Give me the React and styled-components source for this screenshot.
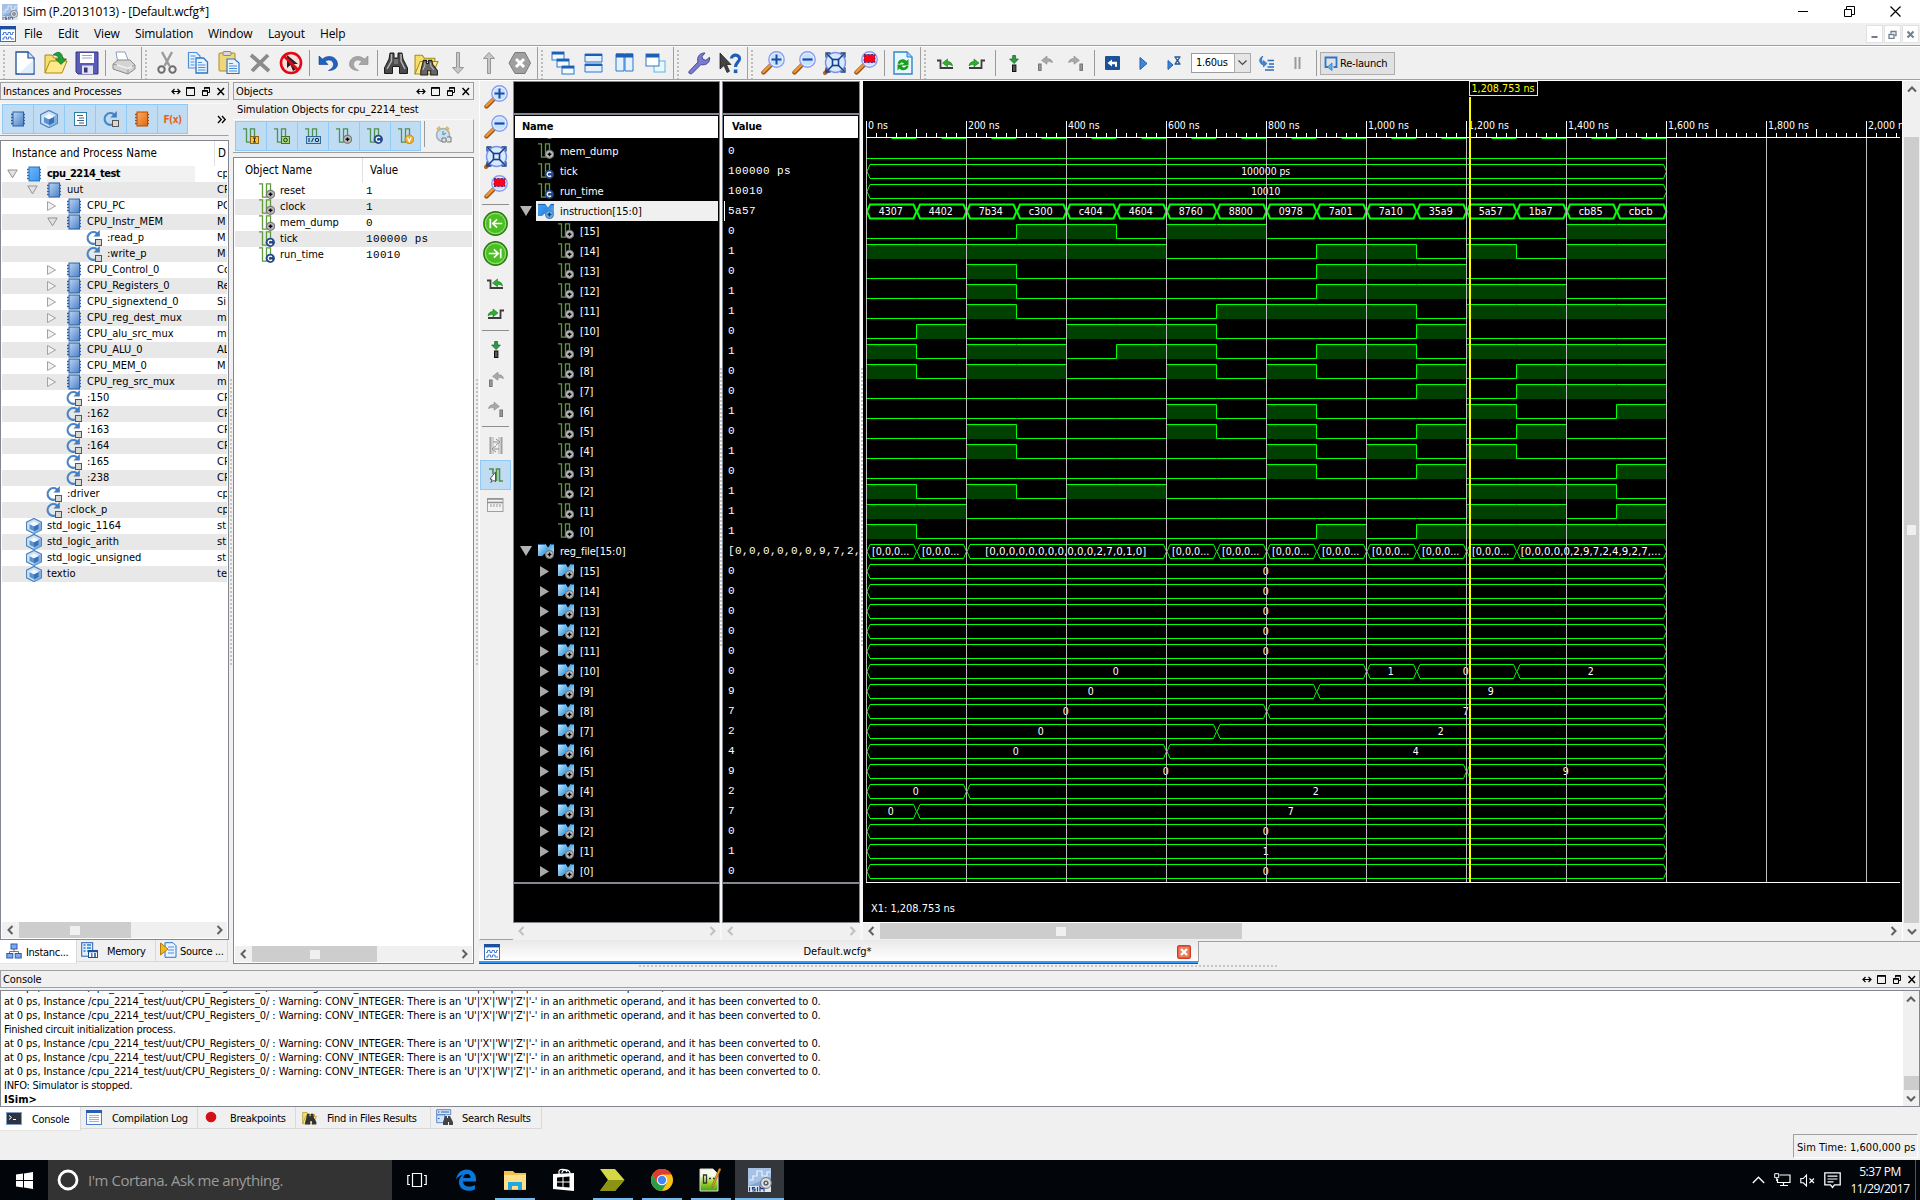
import React from "react";
import styled, { createGlobalStyle, css } from "styled-components";

const TAHOMA = `"DejaVu Sans Condensed", "DejaVu Sans", "Noto Sans", sans-serif`;
const SEGOE = `"Open Sans", "Noto Sans", sans-serif`;
const MONO = `"Liberation Mono", "DejaVu Sans Mono", monospace`;

const Global = createGlobalStyle`
  html, body { margin: 0; padding: 0; background: #f0f0f0; overflow: hidden; }
  * { box-sizing: border-box; }
  svg { display: block; flex: none; }
`;

const Screen = styled.div`
  width: 1920px;
  height: 1200px;
  display: flex;
  flex-direction: column;
  overflow: hidden;
  background: #f0f0f0;
  color: #000;
  font-family: ${TAHOMA};
  font-size: 11px;
  white-space: nowrap;
`;

/* ---------- small icons ---------- */

const Glyph = ({ w = 16, h = w, vw = w, vh = vw === w ? h : vw, children }) => (
  <svg width={w} height={h} viewBox={`0 0 ${vw} ${vh}`} fill="none">{children}</svg>
);

const Chip = ({ tone = "blue", s = 16 }) => {
  const [edge, a, b] = {
    blue: ["#2b5fa8", "#bcd5f2", "#4a80c6"],
    bright: ["#2472c4", "#6db8fa", "#3b93e6"],
    orange: ["#b44a00", "#ffa860", "#e06a10"],
  }[tone];
  return (
    <Glyph w={s} vw={16}>
      <defs>
        <linearGradient id={`chip-${tone}`} x1="0" y1="0" x2="1" y2="1">
          <stop offset="0" stopColor={a} />
          <stop offset="1" stopColor={b} />
        </linearGradient>
      </defs>
      <path d="M1 3.500h14M1 6.500h14M1 9.500h14M1 12.500h14" stroke={edge} strokeWidth="1.500" />
      <rect x="3" y="1" width="10.500" height="14" fill={`url(#chip-${tone})`} stroke={edge} strokeWidth="1" />
    </Glyph>
  );
};

const Process = ({ s = 16 }) => (
  <Glyph w={s} vw={16}>
    <path d="M10 13.200A5.800 5.800 0 1 1 11 3.400" stroke="#4a86c5" strokeWidth="2.200" />
    <path d="M13.800 0v6.400H7.400Z" fill="#3f7cc0" />
    <rect x="9.500" y="9.500" width="6" height="6" fill="#d8d8d8" stroke="#555" />
  </Glyph>
);

const Cube = ({ s = 16 }) => (
  <Glyph w={s} vw={16}>
    <path d="M8 .4 15.500 4.200v7.600L8 15.600.5 11.800V4.200Z" fill="#cfe2f6" stroke="#4f85bd" strokeWidth="1.200" />
    <path d="M8 7.800 15 4.200v7.600L8 15.400Z" fill="#7fb0e2" />
    <path d="M3.500 6 8 8.300v5L3.500 11Z" fill="#5c93cf" />
    <path d="M8 8.300 12.500 6v5L8 13.300Z" fill="#3a70b4" />
    <path d="M3.500 6 8 3.600l4.500 2.400L8 8.300Z" fill="#f3f9ff" />
  </Glyph>
);

const Signal = ({ badge = "plus", s = 16, stroke = "#5f9a3c" }) => (
  <Glyph w={s} vw={16}>
    <path d="M0 .8H3.500V14.200H7.500V.8H11.500V9" stroke={stroke} strokeWidth="1.300" />
    {badge === "plus" && (
      <>
        <circle cx="11.500" cy="11.300" r="4.600" fill="#777" />
        <circle cx="11.500" cy="11.300" r="3.400" fill="#c0c0c0" />
        <path d="M11.500 9.400v3.800M9.600 11.300h3.800" stroke="#000" strokeWidth="1.500" />
      </>
    )}
    {badge === "c" && (
      <>
        <circle cx="11.300" cy="11.300" r="4.600" fill="#24498e" />
        <path d="M13 9.800a2.200 2.200 0 1 0 0 3" stroke="#fff" strokeWidth="1.300" />
      </>
    )}
    {badge === "i" && (
      <>
        <rect x="7.500" y="8.500" width="8" height="7" fill="#f6c545" stroke="#8a6a10" />
        <path d="M10 10h3M11.500 10v4M10 14h3" stroke="#222" />
      </>
    )}
    {badge === "o" && (
      <>
        <rect x="7.500" y="8.500" width="8" height="7" fill="#a8d880" stroke="#3b7a1b" />
        <circle cx="11.500" cy="12" r="1.800" stroke="#1b3a0a" />
      </>
    )}
    {badge === "io" && (
      <>
        <rect x="1.500" y="8.500" width="14" height="7" fill="#a9d5f5" stroke="#2b6ba0" />
        <path d="M4 10v4M6.500 14l2-4" stroke="#123" />
        <circle cx="12" cy="12" r="1.700" stroke="#123" />
      </>
    )}
    {badge === "v" && (
      <>
        <circle cx="11.300" cy="11.300" r="4.400" fill="#f0b030" stroke="#a07010" strokeWidth=".6" />
        <path d="M9.500 9.500 11.300 13.500 13 9.500" stroke="#fff" strokeWidth="1.200" />
      </>
    )}
  </Glyph>
);

const Bus = ({ hot }) => (
  <Glyph w={16}>
    <defs>
      <linearGradient id={hot ? "bus-hot" : "bus"} x1="0" y1="0" x2="1" y2=".6">
        <stop offset="0" stopColor={hot ? "#4aa4f0" : "#d6ecfb"} />
        <stop offset=".6" stopColor={hot ? "#2f8ae4" : "#4aa6e4"} />
        <stop offset="1" stopColor={hot ? "#5aaef4" : "#a8d8f8"} />
      </linearGradient>
    </defs>
    <path d="M0 1h7.500L10 4.500 12.500 1H16v11H9.500L7 10.500 4 13H0Z" fill={`url(#${hot ? "bus-hot" : "bus"})`} />
    <path d="M0 1.400h7.200M13 1.400h3" stroke="#1c5f9c" />
    <circle cx="11.500" cy="11.500" r="4.500" fill={hot ? "#3f86c8" : "#777"} />
    <circle cx="11.500" cy="11.500" r="3.200" fill={hot ? "#6fb0e6" : "#c0c0c0"} />
    <path d="M11.500 9.600v3.800M9.600 11.500h3.800" stroke={hot ? "#143c6c" : "#000"} strokeWidth="1.400" />
  </Glyph>
);

const WaveDoc = ({ s = 16 }) => (
  <Glyph w={s} vw={16}>
    <rect x=".5" y=".5" width="15" height="15" fill="#fff" stroke="#3f6fb5" />
    <rect width="16" height="3.400" fill="#1d4fa0" />
    <path d="M2 8.500h1.500v-2H6v2h2v-2h2.500v2h2v-2H14M2 13h2v-2h2.500v2h2v-2H11v2h3" stroke="#3a6fd0" strokeWidth=".9" />
  </Glyph>
);

const ISimLogo = ({ s = 16 }) => (
  <Glyph w={s} vw={24}>
    <rect width="23" height="24" fill="#7fa6d8" />
    <path d="M0 0h23v9L0 18Z" fill="#b5cdec" opacity=".7" />
    <path d="M1 12h4V8h4V3h5v5h5V4h4" stroke="#fff" strokeWidth="1.200" opacity=".8" />
    <rect y="18" width="23" height="6" fill="#dfe7f3" />
    <path d="M1.500 19v4.500M7 19.500H4.500v1.700H7V23H4.200M9.500 19v4.500M12 23.500V19l2 2 2-2v4.500" stroke="#1c3b7a" strokeWidth="1.200" />
    <circle cx="18" cy="15" r="5.400" fill="#d9dde2" stroke="#6a717b" strokeWidth="1" />
    <circle cx="18" cy="15" r="2.600" fill="#59606a" />
    <circle cx="18" cy="15" r="1" fill="#fff" />
  </Glyph>
);

const Lens = ({ kind }) => (
  <Glyph w={24}>
    <path d="M2.500 21.500 9.500 14.500" stroke="#9a5416" strokeWidth="4.400" strokeLinecap="round" />
    <path d="M2.400 21 9.200 14.200" stroke="#f0983c" strokeWidth="2.400" strokeLinecap="round" />
    <circle cx="15.500" cy="8.500" r="7.700" fill="#eaf4ff" stroke="#8c9cf0" strokeWidth="1.400" />
    <circle cx="15.500" cy="8.500" r="6" fill="#c3e2ff" />
    {kind === "in" && <path d="M15.500 3.500v10M10.500 8.500h10" stroke="#1c4aa0" strokeWidth="2" />}
    {kind === "out" && <path d="M10.500 8.500h10" stroke="#1c4aa0" strokeWidth="2.200" />}
    {kind === "box" && (
      <>
        <rect x="10" y="3.500" width="11" height="8" fill="#ff0018" />
        <path d="M10 3.500h11v8H10Z" stroke="#1a2a80" strokeDasharray="2 1.500" strokeWidth=".8" />
      </>
    )}
  </Glyph>
);

const LensFit = () => (
  <Glyph w={24}>
    <path d="M2 22 5 19" stroke="#b5621a" strokeWidth="4" strokeLinecap="round" />
    <circle cx="12.500" cy="11.500" r="10" fill="#d6e9ff" stroke="#7d92ea" strokeWidth="1.400" />
    <rect x="9.500" y="8.500" width="6" height="6" stroke="#143f86" strokeWidth="1.600" />
    <path d="M9.500 8.500 4 3M15.500 8.500 21 3M9.500 14.500 4 20M15.500 14.500 21 20" stroke="#143f86" strokeWidth="1.500" />
    <path d="M3 6.500V2h4.500M17.500 2H22v4.500M3 16.500V21h4.500M17.500 21H22v-4.500" stroke="#143f86" strokeWidth="1.300" />
  </Glyph>
);

const Binoculars = ({ s = 24 }) => (
  <Glyph w={s} vw={24}>
    <path d="M6 2h4v5h4V2h4l1 6 4.500 9v5.500H15.500v-7h-7v7H.5V17L5 8Z" fill="#4a4a4a" stroke="#1b1b1b" />
    <path d="M7.500 3v7l-4.500 8M17 3v7l4 8" stroke="#b4b4b4" strokeWidth="1.500" />
    <path d="M11 8v5M13 8v5" stroke="#999" />
  </Glyph>
);

const FolderShape = () => (
  <>
    <path d="M1 22V4h7l2 3h10v4" fill="#f5df6c" stroke="#a88a14" />
    <path d="M1 22 6 10h17l-5 12Z" fill="#ffe98a" stroke="#a88a14" />
  </>
);

const Edge = ({ dir, w = 17 }) => (
  <Glyph w={w} h={11}>
    {dir === "prev" ? (
      <>
        <path d="M0 2.500H3.500V10H16" stroke="#3c3c3c" strokeWidth="1.800" />
        <path d="M15.500 8C15 4.600 13 3.600 10.500 3.600V1L5.500 5l5 3.800V6.500c2 0 3.600 0 5 1.500Z" fill="#2fae2f" stroke="#0f7a16" strokeWidth=".6" />
      </>
    ) : (
      <>
        <path d="M17 2.500H13.500V10H1" stroke="#3c3c3c" strokeWidth="1.800" />
        <path d="M1 8C1.500 4.600 3.500 3.600 6 3.600V1L11 5 6 8.800V6.500C4 6.500 2.400 6.500 1 8Z" fill="#2fae2f" stroke="#0f7a16" strokeWidth=".6" />
      </>
    )}
  </Glyph>
);

const MarkerAdd = () => (
  <Glyph w={10} h={17}>
    <path d="M3.600.5h3v3.500h2.800L5.100 8.600.6 4h3Z" fill="#2f9a45" stroke="#146326" strokeWidth=".7" />
    <rect x="3.500" y="10" width="3.400" height="6.500" fill="#555" stroke="#111" />
  </Glyph>
);

const MarkerGo = ({ dir }) => (
  <Glyph w={16} h={15}>
    <g transform={dir === "next" ? "matrix(-1 0 0 1 16 0)" : undefined}>
      <path d="M15.500 6.500C15 3.600 12.500 2.600 10 2.600V0L4.600 4.400 10 8.200V5.600c2 0 3.600 0 5.500.9Z" fill="#a8a8a8" stroke="#8a8a8a" strokeWidth=".6" />
      <rect x="1.500" y="8" width="2.600" height="6.600" fill="#999" stroke="#777" />
    </g>
  </Glyph>
);

const GreenJump = ({ dir }) => (
  <Glyph w={25} vw={24}>
    <circle cx="12" cy="12" r="11.200" fill="#4bbf22" stroke="#2b7d10" strokeWidth="1.400" />
    <circle cx="12" cy="12" r="9.700" stroke="#a6e88c" strokeWidth=".9" />
    <g transform={dir === "end" ? "matrix(-1 0 0 1 24 0)" : undefined} stroke="#fff" strokeWidth="1.600">
      <path d="M7 7.500v9M18.500 12H9.500M13.500 8 9.400 12l4.100 4" />
    </g>
  </Glyph>
);

/* ---------- main toolbar icons ---------- */

const TOOL_ICONS = {
  new: (
    <Glyph w={22} h={24}>
      <path d="M2 1h12l6 6v16H2Z" fill="#fff" stroke="#1c4f9c" strokeWidth="1.300" />
      <path d="M5 22.300 19.300 9v13.300Z" fill="#e3eefb" />
      <path d="M14 1v6h6" fill="#cfe2f8" stroke="#1c4f9c" strokeWidth="1.200" />
    </Glyph>
  ),
  open: (
    <Glyph w={24}>
      <FolderShape />
      <path d="M9 4c5-4.500 9-3.500 10 4h3.500l-5.500 5.500L11.500 8H15c-.5-3-2.500-4-6-4Z" fill="#22a038" stroke="#0d6a20" strokeWidth=".7" />
    </Glyph>
  ),
  save: (
    <Glyph w={24}>
      <path d="M1 1h22v22H3l-2-2Z" fill="#5a5ab8" stroke="#36367e" />
      <rect x="5" y="2" width="14" height="10" fill="#fff" />
      <path d="M7 4.500h10M7 7h10" stroke="#9c9cc8" />
      <rect x="7" y="14.500" width="11" height="8.500" fill="#e3e3ee" />
      <rect x="9" y="16.500" width="3.500" height="5" fill="#36367e" />
    </Glyph>
  ),
  print: (
    <Glyph w={24}>
      <path d="M5.500 10 4 1h9l3.500 9Z" fill="#fff" stroke="#8e9cc0" />
      <path d="M1 13 6 9h12l5 5v4l-7 5L1 18Z" fill="#d4d4d4" stroke="#8a8a8a" />
      <path d="M1 13 16 17.500 23 14M16 17.500V23" stroke="#999" />
      <path d="M5 14l11 3.500 4-2" stroke="#f5f5f5" strokeWidth="1.500" />
    </Glyph>
  ),
  cut: (
    <Glyph w={20} h={24}>
      <path d="M5 1 12.500 15M15 1 7.500 15" stroke="#9a9a9a" strokeWidth="2.400" />
      <circle cx="4.500" cy="18.500" r="3.200" stroke="#6d6d6d" strokeWidth="2" />
      <circle cx="15.500" cy="18.500" r="3.200" stroke="#6d6d6d" strokeWidth="2" />
    </Glyph>
  ),
  copy: (
    <Glyph w={22} h={24}>
      <path d="M1.500 1.500h8l3.500 3.500v12H1.500Z" fill="#e8f3ff" stroke="#4c8fd8" strokeWidth="1.200" />
      <path d="M3.500 5h5M3.500 8h4M3.500 11h4M3.500 14h4" stroke="#4c8fd8" strokeWidth="1.200" />
      <path d="M9 7h7.500L20.500 11v11H9Z" fill="#e8f3ff" stroke="#2c76c8" strokeWidth="1.300" />
      <path d="M11 11.500h4M11 14h7.500M11 16.500h7.500M11 19h7.500" stroke="#4c8fd8" strokeWidth="1.200" />
    </Glyph>
  ),
  paste: (
    <Glyph w={22} h={24}>
      <rect x="1" y="2" width="16" height="18" rx="1" fill="#f0d878" stroke="#b08a20" />
      <rect x="5" y=".5" width="8" height="4" rx="1" fill="#d9d9d9" stroke="#888" />
      <path d="M9 8h7.500l4.500 4v10.500H9Z" fill="#e8f3ff" stroke="#2c76c8" strokeWidth="1.200" />
      <path d="M11 12.500h4M11 15h8M11 17.500h8M11 20h8" stroke="#4c8fd8" />
    </Glyph>
  ),
  del: (
    <Glyph w={22} h={22}>
      <path d="M2 3 20 19M19 3 3 19" stroke="#8b8b8b" strokeWidth="3.800" />
    </Glyph>
  ),
  noselect: (
    <Glyph w={24}>
      <circle cx="12" cy="12" r="10" stroke="#e30613" strokeWidth="2.600" fill="#fbe0e0" />
      <path d="M8 4v13l3.500-3 2.500 6 2.500-1.200-2.500-5.800H19Z" fill="#222" />
      <path d="M5 5 19 19" stroke="#e30613" strokeWidth="2.800" />
    </Glyph>
  ),
  undo: (
    <Glyph w={20} h={20}>
      <path d="M1 3v8.500h9L7.300 8.500C11 5.500 15.500 7.500 15.500 11.500c0 2.500-2 4.500-5 6C16 17.500 19.500 15 19.500 11 19.500 4.500 11 .5 4.500 6Z" fill="#1f62c0" stroke="#123f88" strokeWidth=".6" />
    </Glyph>
  ),
  redo: (
    <Glyph w={20} h={20}>
      <path d="M19 3v8.500h-9l2.700-3C9 5.500 4.500 7.500 4.500 11.500c0 2.500 2 4.500 5 6C4 17.500.5 15 .5 11 .5 4.500 9 .5 15.500 6Z" fill="#a5a5a5" stroke="#888" strokeWidth=".6" />
    </Glyph>
  ),
  find: <Binoculars />,
  findfiles: (
    <Glyph w={25} vw={24}>
      <FolderShape />
      <path d="M9 9h3v3h2V9h3l1 4 4.500 6v4h-6.500v-4h-3v4H6.500v-4L8 13Z" fill="#666" stroke="#222" />
      <path d="M10.500 11v3l-2 4M16 11v3l3 4" stroke="#bbb" />
    </Glyph>
  ),
  down: (
    <Glyph w={12} h={22}>
      <path d="M4.500.5h3v15h4L6 21.500.5 15.500h4Z" fill="#c6c6c6" stroke="#8d8d8d" strokeWidth=".9" />
    </Glyph>
  ),
  up: (
    <Glyph w={12} h={22}>
      <path d="M4.500 21.500h3v-15h4L6 .5.5 6.500h4Z" fill="#c6c6c6" stroke="#8d8d8d" strokeWidth=".9" />
    </Glyph>
  ),
  stop: (
    <Glyph w={24}>
      <path d="M7 1.500h10l5.500 10.500-5.500 10.500H7L1 12Z" fill="#a0a0a0" stroke="#7a7a7a" />
      <path d="M8 8 16 16M16 8 8 16" stroke="#fff" strokeWidth="3" />
    </Glyph>
  ),
  cascade: (
    <Glyph w={24}>
      {[[1, 1], [6, 8], [11, 15]].map(([x, y]) => (
        <g key={x}>
          <rect x={x} y={y} width="12" height="8" fill="#f2f9ff" stroke="#2c76c8" />
          <rect x={x} y={y} width="12" height="2.500" fill="#1c5fb4" />
        </g>
      ))}
    </Glyph>
  ),
  tileH: (
    <Glyph w={20} h={20}>
      <path d="M1 1h17v8H1ZM1 11h17v8H1Z" fill="#e4f2ff" stroke="#2c76c8" />
      <path d="M1 2h17M1 12h17" stroke="#1c5fb4" strokeWidth="2" />
    </Glyph>
  ),
  tileV: (
    <Glyph w={20} h={20}>
      <path d="M1 1h8v17H1ZM10 1h8v17h-8Z" fill="#e4f2ff" stroke="#2c76c8" />
      <path d="M1 2.500h17" stroke="#1c5fb4" strokeWidth="4" />
    </Glyph>
  ),
  swap: (
    <Glyph w={22} h={20}>
      <rect x="9" y="8" width="11" height="11" fill="#e9f7ff" stroke="#58b4e8" />
      <rect x="1" y="1" width="13" height="12" fill="#fff" stroke="#2c76c8" />
      <rect x="1" y="1" width="13" height="3.500" fill="#1c5fb4" />
    </Glyph>
  ),
  wrench: (
    <Glyph w={24}>
      <path d="M2 20.500 11 11C9.500 6 13 1.500 18 2l-3 3.500 1 3 3 .8 3.500-3C23.500 11 19 15 14 13.500L5 22.500c-2 1-4-.5-3-2Z" fill="#7a7ad0" stroke="#44449a" />
    </Glyph>
  ),
  whats: (
    <Glyph w={24}>
      <path d="M2 2v16l4-3.500 3 7 2.500-1.200-3-6.800H13Z" fill="#444" stroke="#111" strokeWidth=".7" />
      <path d="M13.500 7.500C13.500 3 22 3 21.500 8c-.2 3-4 3.500-4 8" stroke="#1c5fb4" strokeWidth="3.200" />
      <rect x="15.800" y="18.500" width="3.600" height="3.600" fill="#1c5fb4" />
    </Glyph>
  ),
  zin: <Lens kind="in" />,
  zout: <Lens kind="out" />,
  zfit: <LensFit />,
  zbox: <Lens kind="box" />,
  refresh: (
    <Glyph w={20} h={24}>
      <path d="M1 1h13l5 5v17H1Z" fill="#e8f6ff" stroke="#2c86c8" strokeWidth="1.400" />
      <path d="M14 1v5h5" fill="#9fd0f4" stroke="#2c86c8" />
      <path d="M4.500 12.500c1-5 7-5.500 9-2.500l2-2v6.500H9l2-2.200c-1.500-1.500-3.500-1-4 .700Z" fill="#18a018" />
      <path d="M15.500 15c-1 5-7 5.500-9 2.500l-2 2V13.500H10l-1 2c1.500 1.500 3.500 1 4-.500Z" fill="#18a018" />
    </Glyph>
  ),
  prevEdge: <Edge dir="prev" />,
  nextEdge: <Edge dir="next" />,
  marker: <MarkerAdd />,
  prevMark: <MarkerGo dir="prev" />,
  nextMark: <MarkerGo dir="next" />,
  restart: (
    <Glyph w={15} h={14}>
      <rect width="15" height="14" rx="1" fill="#1c5196" />
      <path d="M2.500 7 7 3.500v2.300h5v5H10V8.300H7v2.300Z" fill="#fff" />
    </Glyph>
  ),
  play: (
    <Glyph w={9} h={13}>
      <path d="M1 .5 8 6.500 1 12.500Z" fill="#3f86d8" stroke="#1c5fb4" />
    </Glyph>
  ),
  runfor: (
    <Glyph w={15} h={14}>
      <path d="M1 4.500 6 9 1 13.500Z" fill="#3f86d8" stroke="#1c5fb4" />
      <path d="M7.500 1h6M7.500 8h6M8.500 1c0 3 4 4 4 7M12.500 1c0 3-4 4-4 7" stroke="#24569c" strokeWidth="1.300" />
    </Glyph>
  ),
  step: (
    <Glyph w={17} h={15}>
      <path d="M5 0C0 2 1 8 5.500 9V11L9 7.500 5.500 4.500v2C3.500 6 3 2.500 5 0Z" fill="#3f86d8" stroke="#1c5fb4" strokeWidth=".6" />
      <path d="M9.500 4.500H16M11 8h5M9.500 11H16M7 14h9" stroke="#2c6cbc" strokeWidth="1.400" />
    </Glyph>
  ),
  pause: (
    <Glyph w={7} h={12}>
      <path d="M1.500 0v12M5.500 0v12" stroke="#9a9a9a" strokeWidth="2" />
    </Glyph>
  ),
};

/* ---------- title and menu ---------- */

const TitleBar = styled.header`
  flex: none;
  height: 23px;
  display: flex;
  align-items: center;
  background: #fff;
  padding-left: 2px;
  font-family: ${SEGOE};
  font-size: 12px;
`;
const TitleText = styled.span`
  margin-left: 5px;
  flex: 1;
  line-height: 20px;
  letter-spacing: -0.22px;
`;
const WindowButtons = styled.div`
  display: flex;
  gap: 35px;
  padding-right: 19px;
  height: 20px;
  align-items: center;
`;

const MenuBar = styled.nav`
  flex: none;
  height: 23px;
  display: flex;
  align-items: center;
  border-bottom: 1px solid #a0a0a0;
  font-family: ${SEGOE};
  font-size: 12px;
  line-height: 22px;
  letter-spacing: -0.15px;
`;
const MenuItem = styled.span`
  width: ${(p) => p.$w}px;
  padding-left: 8px;
`;
const MdiButtons = styled.div`
  margin-left: auto;
  display: flex;
  gap: 1px;
  margin-right: 1px;
`;
const MdiButton = styled.span`
  width: 17px;
  height: 18px;
  display: grid;
  place-items: center;
  background: #fff;
  border: 1px solid #e2e2e2;
`;

/* ---------- tool bar ---------- */

const ToolStrip = styled.div`
  flex: none;
  height: 35px;
  display: flex;
  border-top: 1px solid #fff;
  border-bottom: 1px solid #fff;
  box-shadow: inset 0 -1px #a0a0a0;
`;
const ToolGroup = styled.div`
  display: flex;
  align-items: center;
  width: ${(p) => p.$w}px;
  padding-bottom: 1px;
  border-right: ${(p) => (p.$last ? "0" : "1px solid #a0a0a0")};
`;
const Grip = styled.i`
  width: 2px;
  height: 29px;
  margin: 2px 4px 0 3px;
  background: repeating-linear-gradient(#bdbdbd 0 2px, transparent 2px 4px);
`;
const Slot = styled.span`
  width: 31px;
  display: grid;
  place-items: center;
`;
const Divider = styled.i`
  width: 1px;
  height: 26px;
  margin: 0 2px 0 3px;
  background: #9a9a9a;
`;
const Combo = styled.span`
  display: flex;
  width: 60px;
  height: 20px;
  margin-left: 1px;
  border: 1px solid #9c9c9c;
  background: #fff;
  line-height: 18px;
  padding-left: 4px;
  letter-spacing: -0.3px;
  justify-content: space-between;
`;
const ComboArrow = styled.span`
  width: 17px;
  display: grid;
  place-items: center;
  background: #e5e5e5;
  border: 1px solid #ababab;
  margin: -1px;
`;
const Relaunch = styled.button`
  display: flex;
  align-items: center;
  gap: 2px;
  width: 75px;
  height: 23px;
  margin-left: 1px;
  padding: 0 0 0 3px;
  border: 1px solid #adadad;
  background: #e1e1e1;
  font: 11px ${TAHOMA};
  letter-spacing: -0.2px;
  white-space: nowrap;
`;

const GROUPS = [
  { w: 142, items: ["new", "open", "save", "|", "print"] },
  { w: 396, items: ["cut", "copy", "paste", "del", "noselect", "|", "undo", "redo", "|", "find", "findfiles", "down", "up", "stop"] },
  { w: 136, items: ["cascade", "tileH", "tileV", "swap"] },
  { w: 74, items: ["wrench", "whats"] },
  { w: 173, items: ["zin", "zout", "zfit", "zbox", "|", "refresh"] },
  {
    w: 999,
    items: ["prevEdge", "nextEdge", "|", "marker", "prevMark", "nextMark", "|", "restart", "play", "runfor", "combo", "step", "pause", "|", "relaunch"],
  },
];

const ToolItem = ({ name }) => {
  if (name === "|") return <Divider />;
  if (name === "combo")
    return (
      <Combo>
        1.60us
        <ComboArrow>
          <Glyph w={9} h={6}><path d="M.5.5l4 4 4-4" stroke="#444" strokeWidth="1.200" /></Glyph>
        </ComboArrow>
      </Combo>
    );
  if (name === "relaunch")
    return (
      <Relaunch>
        <Glyph w={14} h={15}>
          <path d="M4 11H1.500V1.500h11V11H9.500" stroke="#2c76c8" strokeWidth="1.800" />
          <path d="M8 7v7.500L3.500 11Z" fill="#58b4e8" stroke="#2c76c8" strokeWidth=".8" />
        </Glyph>
        Re-launch
      </Relaunch>
    );
  return <Slot>{TOOL_ICONS[name]}</Slot>;
};

/* ---------- docks ---------- */

const Workspace = styled.main`
  flex: none;
  height: 889px;
  display: flex;
`;
const Dock = styled.section`
  width: ${(p) => p.$w}px;
  height: 883px;
  padding-top: 1px;
  display: flex;
  flex-direction: column;
`;
const Splitter = styled.div`
  width: ${(p) => p.$w}px;
  height: ${(p) => p.$h || 883}px;
  display: flex;
  align-items: center;
  justify-content: center;
  background: ${(p) => (p.$light ? "#f7f7f7" : "#f0f0f0")};
  &::before {
    content: "";
    width: 2px;
    height: ${(p) => p.$dots || 288}px;
    margin-top: ${(p) => p.$shift || 0}px;
    background: repeating-linear-gradient(#c4c4c4 0 2px, transparent 2px 4px);
  }
`;
const DockTitle = styled.div`
  flex: none;
  height: 18px;
  display: flex;
  align-items: center;
  border: 1px solid #a0a0a0;
  padding: 0 ${(p) => p.$pad || 3}px 0 2px;
  line-height: 15px;
  letter-spacing: -0.1px;
`;
const DockButtons = styled.span`
  margin-left: auto;
`;
const CheckBar = styled.div`
  flex: none;
  height: ${(p) => p.$h}px;
  margin-top: ${(p) => p.$mt}px;
  padding: ${(p) => p.$pt}px 0 0 2px;
  display: flex;
  align-items: flex-start;
  border-bottom: 1px solid #a0a0a0;
  border-top: 1px solid #fafafa;
  border-right: 1px solid ${(p) => (p.$edge ? "#a0a0a0" : "transparent")};
`;
const CheckButton = styled.span`
  width: 31px;
  height: 30px;
  display: grid;
  place-items: center;
  background: #c0dcf3;
  border: 1px solid #90c8f6;
  border-right-width: ${(p) => (p.$end ? 1 : 0)}px;
`;
const BarExtra = styled.span`
  margin: ${(p) => p.$m};
`;
const ListBox = styled.div`
  flex: 1;
  min-height: 0;
  margin-top: 4px;
  border: 1px solid #828790;
  background: #fff;
  display: flex;
  flex-direction: column;
  padding: 0 1px 1px;
`;
const ListHead = styled.div`
  flex: none;
  height: 25px;
  display: flex;
  line-height: ${(p) => p.$lh || 24}px;
  font-size: 11.500px;
  letter-spacing: ${(p) => p.$ls}px;
`;
const HeadCell = styled.span`
  width: ${(p) => p.$w}px;
  padding-left: ${(p) => p.$pl}px;
  border-right: ${(p) => (p.$w ? "1px solid #e0e0e0" : "0")};
  overflow: hidden;
`;
const Rows = styled.div`
  flex: 1;
  min-height: 0;
  overflow: hidden;
`;
const TreeRow = styled.div`
  height: 16px;
  line-height: 16px;
  display: flex;
  background: ${(p) => (p.$odd ? "#e8e8e8" : "#fff")};
`;
const TreeName = styled.span`
  width: 214px;
  padding-left: ${(p) => p.$indent}px;
  display: flex;
  align-items: center;
  font-weight: ${(p) => (p.$bold ? 700 : 400)};
  letter-spacing: ${(p) => (p.$bold ? -0.5 : 0.03)}px;
`;
const Twisty = styled.span`
  width: 19px;
  display: grid;
  place-items: center start;
`;
const TreeLabel = styled.span`
  margin-left: 5px;
  ${(p) => p.$hot && css`background: #f2f2f2; width: 148px;`}
`;
const TreeType = styled.span`
  width: 10px;
  margin-left: 1px;
  overflow: hidden;
`;
const ObjName = styled.span`
  width: 131px;
  padding-left: 24px;
  display: flex;
  align-items: center;
  gap: 5px;
  letter-spacing: 0;
`;
const ObjValue = styled.span`
  font-family: ${MONO};
  letter-spacing: 0.35px;
`;
const Caption = styled.div`
  height: 19px;
  line-height: 19px;
  padding-left: 4px;
  letter-spacing: -0.1px;
`;

const HBar = styled.div`
  flex: none;
  height: 16px;
  display: flex;
  align-items: center;
  background: #f0f0f0;
`;
const ArrowBox = styled.span`
  width: 17px;
  display: grid;
  place-items: center;
  flex: none;
`;
const Track = styled.div`
  flex: 1;
  align-self: stretch;
  display: flex;
`;
const Thumb = styled.div`
  width: ${(p) => p.$w}px;
  display: grid;
  place-items: center;
  background: #cdcdcd;
  &::after {
    content: "";
    width: 10px;
    height: 9px;
    background: #f0f0f0;
  }
`;

const CHEVRON = {
  left: "M6.500 1 2.500 5l4 4",
  right: "M3.500 1 7.500 5l-4 4",
  up: "M1 6.500 5 2.500l4 4",
  down: "M1 3.500 5 7.500l4-4",
};
const Chevron = ({ dir, faint }) => (
  <Glyph w={10}><path d={CHEVRON[dir]} stroke={faint ? "#bfbfbf" : "#606060"} strokeWidth="2" /></Glyph>
);
const HScroll = ({ thumb, faint }) => (
  <HBar>
    <ArrowBox><Chevron dir="left" faint={faint} /></ArrowBox>
    <Track>{thumb ? <Thumb $w={thumb} /> : null}</Track>
    <ArrowBox><Chevron dir="right" faint={faint} /></ArrowBox>
  </HBar>
);

const DockControls = () => (
  <DockButtons>
    <Glyph w={54} h={11}>
      <path d="M1 5.500h8M3.500 3 1 5.500 3.500 8M6.500 3 9 5.500 6.500 8" stroke="#000" strokeWidth="1.200" />
      <path d="M15.500 1.500h8v8h-8Z" stroke="#000" />
      <path d="M15.500 2h8" stroke="#000" strokeWidth="1.600" />
      <path d="M33.500 3.500v-2h5v5h-2M31.500 4.500h5v5h-5Z" stroke="#000" />
      <path d="M31.500 5h5M33.500 2h5" stroke="#000" strokeWidth="1.500" />
      <path d="M46.500 2 53 9M53 2l-6.500 7" stroke="#000" strokeWidth="1.500" />
    </Glyph>
  </DockButtons>
);

const TREE = [
  ["open", 0, "bright", "cpu_2214_test", "cp"],
  ["open", 1, "chip", "uut", "CP"],
  ["shut", 2, "chip", "CPU_PC", "PC"],
  ["open", 2, "chip", "CPU_Instr_MEM", "M"],
  ["", 3, "proc", ":read_p", "M"],
  ["", 3, "proc", ":write_p", "M"],
  ["shut", 2, "chip", "CPU_Control_0", "Co"],
  ["shut", 2, "chip", "CPU_Registers_0", "Re"],
  ["shut", 2, "chip", "CPU_signextend_0", "Si"],
  ["shut", 2, "chip", "CPU_reg_dest_mux", "m"],
  ["shut", 2, "chip", "CPU_alu_src_mux", "m"],
  ["shut", 2, "chip", "CPU_ALU_0", "AL"],
  ["shut", 2, "chip", "CPU_MEM_0", "M"],
  ["shut", 2, "chip", "CPU_reg_src_mux", "m"],
  ["", 2, "proc", ":150", "CP"],
  ["", 2, "proc", ":162", "CP"],
  ["", 2, "proc", ":163", "CP"],
  ["", 2, "proc", ":164", "CP"],
  ["", 2, "proc", ":165", "CP"],
  ["", 2, "proc", ":238", "CP"],
  ["", 1, "proc", ":driver", "cp"],
  ["", 1, "proc", ":clock_p", "cp"],
  ["", 0, "cube", "std_logic_1164", "st"],
  ["", 0, "cube", "std_logic_arith", "st"],
  ["", 0, "cube", "std_logic_unsigned", "st"],
  ["", 0, "cube", "textio", "te"],
];
const TREE_ICONS = { bright: <Chip tone="bright" />, chip: <Chip />, proc: <Process />, cube: <Cube /> };

const TreeTwisty = ({ state }) => (
  <Twisty>
    {state === "open" && <Glyph w={11} h={10}><path d="M.8 1h9.400L5.500 8.800Z" fill="#e2e2e2" stroke="#929292" /></Glyph>}
    {state === "shut" && <Glyph w={11} h={12}><path d="M.5 1.500v9L8.500 6Z" fill="#f2f2f2" stroke="#a2a2a2" /></Glyph>}
  </Twisty>
);

/* ---------- tabs ---------- */

const TabBar = styled.div`
  flex: none;
  height: ${(p) => p.$h || 24}px;
  display: flex;
  align-items: flex-start;
  letter-spacing: -0.3px;
`;
const Tab = styled.span`
  width: ${(p) => p.$w}px;
  height: ${(p) => (p.$on ? 24 : 22)}px;
  display: flex;
  align-items: center;
  gap: ${(p) => p.$gap || 10}px;
  padding: ${(p) => (p.$on ? "1px 0 0 6px" : `1px 0 0 ${p.$pl || 5}px`)};
  overflow: hidden;
  background: ${(p) => (p.$on ? "#fff" : "#f0f0f0")};
  border-right: 1px solid #d9d9d9;
  border-bottom: 1px solid ${(p) => (p.$on ? "#e6e6e6" : "#d9d9d9")};
  svg { margin-top: -2px; }
`;

const HierarchyIcon = (
  <Glyph w={16}>
    <path d="M8 5v4M3.500 11V8.500h9V11" stroke="#777" />
    <rect x="5" y="1" width="6" height="5" fill="#7fa8e8" stroke="#2c5cb0" />
    <rect x=".8" y="10.500" width="6" height="4.500" fill="#7fa8e8" stroke="#2c5cb0" />
    <rect x="9.200" y="10.500" width="6" height="4.500" fill="#7fa8e8" stroke="#2c5cb0" />
  </Glyph>
);
const MemoryIcon = (
  <Glyph w={17} h={16}>
    <rect x=".7" y=".7" width="11" height="13.500" fill="#e3f0ff" stroke="#2c5cb0" />
    <path d="M2.500 3h2M2.500 6h2M2.500 9h2M6 3h4M6 6h4M6 9h2" stroke="#1c7fd0" strokeWidth="1.600" />
    <rect x="7.500" y="8.500" width="9" height="7" fill="#fff" stroke="#1c4f9c" />
    <path d="M7.500 9.500h9M10 12h1.500M13 12h2M10 14h1.500M13 14h2" stroke="#1c4f9c" strokeWidth="1.300" />
  </Glyph>
);
const SourceIcon = (
  <Glyph w={17} h={16}>
    <path d="M5 .7h8l3 3v11.600H5Z" fill="#e8f3ff" stroke="#2c76c8" />
    <path d="M8 5h6M8 8h6M8 11h6" stroke="#4c8fd8" />
    <path d="M.5 1v12L8 7Z" fill="#f4b81c" stroke="#b07d08" />
  </Glyph>
);
const ConsoleIcon = (
  <Glyph w={16} h={13}>
    <rect x=".5" y=".5" width="15" height="12" fill="#2c3440" stroke="#7f9cc8" />
    <path d="M3 3.500 5.500 5.500 3 7.500M7 7.500h3" stroke="#fff" />
  </Glyph>
);
const LogIcon = (
  <Glyph w={16} h={15}>
    <rect x=".5" y=".5" width="15" height="14" fill="#fafafa" stroke="#4f7fc8" />
    <rect width="16" height="3" fill="#2c5cb0" />
    <path d="M3 5.500h10M3 7.500h10M3 9.500h10M3 11.500h10" stroke="#b0b0b0" />
  </Glyph>
);
const BreakIcon = (
  <Glyph w={12}><circle cx="6" cy="6" r="5.300" fill="#d40f16" /></Glyph>
);
const FindIcon = (
  <Glyph w={15} vw={24}>
    <FolderShape />
    <path d="M8 6h4v4h2V6h4l1 6 4 7v4h-7v-5h-3v5H5v-4l2-7Z" fill="#333" />
  </Glyph>
);
const SearchIcon = (
  <Glyph w={17} h={16}>
    <path d="M.7.7h14v5H.7ZM.7 5.700h8v8h-8Z" fill="#d4e3f8" stroke="#5c88c8" />
    <path d="M2 3h1.500M5 3h8M2 9.500h1.500" stroke="#2c5cb0" />
    <path d="M9 7h2v2h1V7h2l3 6v3h-4v-3h-1v3H7v-3Z" fill="#444" />
  </Glyph>
);

/* ---------- wave window ---------- */

const WaveDock = styled.section`
  flex: 1;
  min-width: 0;
  display: flex;
  flex-direction: column;
`;
const WaveTop = styled.div`
  flex: none;
  height: 859px;
  display: flex;
`;
const SideTools = styled.div`
  width: 34px;
  display: flex;
  flex-direction: column;
  align-items: flex-start;
  border-left: 1px solid #fff;
  border-bottom: 1px solid #a0a0a0;
  padding-top: 1px;
`;
const SideSlot = styled.span`
  width: 31px;
  height: 30px;
  flex: none;
  display: grid;
  place-items: center;
  ${(p) => p.$on && css`background: #c0dcf3; border: 1px solid #90c8f6;`}
`;
const SideRule = styled.i`
  width: 27px;
  height: 1px;
  margin: 2px 0 3px 2px;
  background: #8e8e8e;
  flex: none;
`;

const Column = styled.div`
  width: ${(p) => p.$w}px;
  display: flex;
  flex-direction: column;
  background: #f0f0f0;
`;
const ColumnBody = styled.div`
  height: 842px;
  flex: none;
  display: flex;
  flex-direction: column;
  background: #000;
  border: 1px solid #828790;
  color: #fff;
`;
const ColumnGap = styled.div`
  flex: none;
  height: 33px;
  border-bottom: 2px solid #828790;
  margin-bottom: 1px;
`;
const ColumnHead = styled.div`
  flex: none;
  height: 22px;
  margin: 0 1px;
  background: #fff;
  color: #000;
  font-weight: 700;
  padding-left: ${(p) => p.$pl}px;
  line-height: 22px;
  letter-spacing: -0.2px;
`;
const Cropped = styled.div`
  flex: none;
  height: 3px;
  overflow: hidden;
  display: flex;
  align-items: flex-end;
  padding: 0 0 2px 24px;
`;
const WaveRow = styled.div`
  flex: none;
  height: 20px;
  display: flex;
  align-items: center;
`;
const WaveTwist = styled.span`
  width: ${(p) => (p.$deep ? 44 : 22)}px;
  padding-left: ${(p) => (p.$deep ? 26 : 6)}px;
`;
const WaveName = styled.span`
  flex: 1;
  height: 20px;
  margin-right: 1px;
  padding-left: ${(p) => (p.$deep ? 0 : 2)}px;
  display: flex;
  align-items: center;
  gap: 6px;
  letter-spacing: ${(p) => (p.$deep ? -0.3 : -0.05)}px;
  background: ${(p) => (p.$hot ? "#f0f0f0" : "transparent")};
  color: ${(p) => (p.$hot ? "#000" : "#fff")};
`;
const WaveValue = styled(WaveRow)`
  font-family: ${MONO};
  letter-spacing: 0.4px;
  margin-left: 1px;
  padding-left: 3px;
  border-left: 1px solid ${(p) => (p.$hot ? "#fff" : "transparent")};
  overflow: hidden;
`;
const ColumnFoot = styled.div`
  flex: 1;
  margin-top: 1px;
  border-top: 2px solid #828790;
`;

const WORDS = ["4307", "4402", "7b34", "c300", "c404", "4604", "8760", "8800", "0978", "7a01", "7a10", "35a9", "5a57", "1ba7", "cb85", "cbcb"];
const CUT = "[0,0,0...";
const bus = (...cells) => ({ kind: "bus", cells });
const REGS = [
  [[0, 1600, "0"]],
  [[0, 1600, "0"]],
  [[0, 1600, "0"]],
  [[0, 1600, "0"]],
  [[0, 1600, "0"]],
  [[0, 1000, "0"], [1000, 1100, "1"], [1100, 1300, "0"], [1300, 1600, "2"]],
  [[0, 900, "0"], [900, 1600, "9"]],
  [[0, 800, "0"], [800, 1600, "7"]],
  [[0, 700, "0"], [700, 1600, "2"]],
  [[0, 600, "0"], [600, 1600, "4"]],
  [[0, 1200, "0"], [1200, 1600, "9"]],
  [[0, 200, "0"], [200, 1600, "2"]],
  [[0, 100, "0"], [100, 1600, "7"]],
  [[0, 1600, "0"]],
  [[0, 1600, "1"]],
  [[0, 1600, "0"]],
];
const REG_VALUES = ["0", "0", "0", "0", "0", "0", "9", "7", "2", "4", "9", "2", "7", "0", "1", "0"];

const SIGNALS = [
  { name: "mem_dump", icon: "plus", value: "0", trace: { kind: "low" } },
  { name: "tick", icon: "c", value: "100000 ps", trace: bus([0, 1600, "100000 ps"]) },
  { name: "run_time", icon: "c", value: "10010", trace: bus([0, 1600, "10010"]) },
  { name: "instruction[15:0]", icon: "bus", value: "5a57", hot: true, open: true, trace: { ...bus(...WORDS.map((w, i) => [i * 100, i * 100 + 100, w])), thick: true } },
  ...Array.from({ length: 16 }, (_, i) => {
    const bit = 15 - i;
    const bits = WORDS.map((w) => (parseInt(w, 16) >> bit) & 1);
    return { name: `[${bit}]`, deep: true, icon: "plus", value: String(bits[12]), trace: { kind: "bit", bits } };
  }),
  {
    name: "reg_file[15:0]",
    icon: "bus",
    open: true,
    value: "[0,0,0,0,0,0,9,7,2,",
    trace: bus(
      [0, 100, CUT], [100, 200, CUT], [200, 600, "[0,0,0,0,0,0,0,0,0,0,0,2,7,0,1,0]"],
      [600, 700, CUT], [700, 800, CUT], [800, 900, CUT], [900, 1000, CUT], [1000, 1100, CUT],
      [1100, 1200, CUT], [1200, 1300, CUT], [1300, 1600, "[0,0,0,0,0,2,9,7,2,4,9,2,7,..."]
    ),
  },
  ...REGS.map((cells, i) => ({ name: `[${15 - i}]`, deep: true, shut: true, icon: "bus", value: REG_VALUES[i], trace: bus(...cells) })),
];

const WaveSvg = styled.svg`
  background: #000;
  text { font-family: ${TAHOMA}; font-size: 11px; fill: #fff; }
`;
const CursorText = styled.text`
  && { fill: #ff0; }
`;
const LABEL_WIDTH = { 1: 6, 4: 24, 5: 29, 9: 49 };
const xOf = (ns) => 866.5 + ns / 2;

const BusTrace = ({ y, cells, thick }) => {
  const top = y + 3.5;
  const bottom = y + 17.5;
  const mid = (top + bottom) / 2;
  return (
    <g>
      {cells.map(([from, to, label]) => {
        const a = xOf(from);
        const b = xOf(to);
        const width = label === CUT ? 37.5 : label.length > 20 ? (label.endsWith("]") ? 161 : 140) : LABEL_WIDTH[label.length];
        return (
          <React.Fragment key={from}>
            <path
              d={`M${a + 0.5} ${mid}L${a + 3.5} ${top}H${b - 3}L${b} ${mid}L${b - 3} ${bottom}H${a + 3.5}Z`}
              fill="none" stroke="#0f0" strokeWidth={thick ? 2 : 1}
            />
            <text x={(a + b) / 2 - 0.8} y={y + 14} textAnchor="middle" textLength={width} lengthAdjust="spacingAndGlyphs">{label}</text>
          </React.Fragment>
        );
      })}
    </g>
  );
};

const BitTrace = ({ y, bits }) => {
  let d = "";
  bits.forEach((b, i) => {
    const level = b ? y + 3.5 : y + 17.5;
    d += `${i ? "L" : "M"}${xOf(i * 100)} ${level}H${xOf(i * 100 + 100)}`;
  });
  return (
    <g>
      {bits.map((b, i) => b ? <rect key={i} x={866 + i * 50} y={y + 4} width="50" height="14" fill="#004000" /> : null)}
      <path d={d} fill="none" stroke="#0f0" />
    </g>
  );
};

const Waveforms = () => (
  <WaveSvg width="1039" height="841" viewBox="863 81 1039 841">
    {Array.from({ length: 11 }, (_, i) => (
      <text key={i} x={868 + i * 100} y="129" textLength={i === 0 ? 20 : i < 5 ? 31.5 : 41} lengthAdjust="spacingAndGlyphs">
        {`${(i * 200).toLocaleString("en-US")} ns`}
      </text>
    ))}
    {Array.from({ length: 104 }, (_, i) => (
      <path key={i} d={`M${866.5 + i * 10} ${i % 10 === 0 ? 121 : i % 5 === 0 ? 129 : 133}V138`} stroke="#fff" />
    ))}
    <path d="M866 137.500H1900M866 882.500H1900" stroke="#fff" />
    {Array.from({ length: 16 }, (_, i) => (
      <path key={i} d={`M${891.5 + i * 50} 138.500h25`} stroke="#0f0" />
    ))}
    {SIGNALS.map(({ trace }, i) => {
      const y = 141 + i * 20;
      if (trace.kind === "low") return <path key={i} d={`M866.500 ${y + 17.5}H1666`} stroke="#0f0" />;
      if (trace.kind === "bit") return <BitTrace key={i} y={y} bits={trace.bits} />;
      return <BusTrace key={i} y={y} {...trace} />;
    })}
    {Array.from({ length: 11 }, (_, i) => (
      <path key={i} d={`M${866.5 + i * 100} 138V882`} stroke="#c0c0c0" />
    ))}
    <path d="M1470 97V882" stroke="#ff0" strokeWidth="2" />
    <rect x="1469.500" y="81.500" width="68" height="14" fill="#000" stroke="#ff0" />
    <CursorText x="1471.500" y="92" textLength="63" lengthAdjust="spacingAndGlyphs">1,208.753 ns</CursorText>
    <text x="871" y="912" textLength="84" lengthAdjust="spacingAndGlyphs">X1: 1,208.753 ns</text>
  </WaveSvg>
);

const WaveArea = styled.div`
  width: 1039px;
`;
const WaveBar = styled.div`
  border-top: 1px solid #fff;
  padding-right: 1px;
`;
const VBar = styled.div`
  width: ${(p) => p.$w || 18}px;
  border-left: ${(p) => (p.$flush ? 0 : 1)}px solid #fff;
  display: flex;
  flex-direction: column;
  align-items: center;
  background: #f0f0f0;
`;
const VArrow = styled.span`
  height: ${(p) => p.$h}px;
  display: grid;
  place-items: center;
`;
const VThumb = styled.div`
  width: 15px;
  height: ${(p) => p.$h}px;
  margin-top: ${(p) => p.$mt || 0}px;
  display: grid;
  place-items: center;
  align-content: center;
  background: #cdcdcd;
  &::after {
    content: "";
    width: 9px;
    height: ${(p) => (p.$plain ? 0 : 10)}px;
    background: #f0f0f0;
  }
`;

const DocTabs = styled.div`
  flex: none;
  height: 24px;
  display: flex;
`;
const DocTab = styled.div`
  width: 719px;
  height: 23px;
  display: flex;
  align-items: center;
  padding: 2px 7px 0 5px;
  background: linear-gradient(#e9e9e9, #fff);
  border-bottom: 2px solid #3399ff;
  box-shadow: 0 1px #14599c;
  letter-spacing: 0.05px;
`;
const DocName = styled.span`
  flex: 1;
  text-align: center;
  padding-right: 2px;
`;
const DocRest = styled.div`
  flex: 1;
  margin-top: 1px;
  height: 21px;
  border-top: 1px solid #a0a0a0;
  border-left: 1px solid #a0a0a0;
`;
const DotRow = styled.div`
  height: 6px;
  padding: 1px 0 0 160px;
  &::before {
    content: "";
    display: block;
    width: 638px;
    height: 2px;
    background: repeating-linear-gradient(90deg, #c8c8c8 0 2px, transparent 2px 4px);
  }
`;

/* ---------- console ---------- */

const ConsoleBox = styled.div`
  flex: none;
  height: 117px;
  margin-top: 2px;
  display: flex;
  background: #fff;
  border: 1px solid #828790;
`;
const Log = styled.div`
  flex: 1;
  overflow: hidden;
  display: flex;
  flex-direction: column;
  justify-content: flex-end;
  padding-left: 3px;
  letter-spacing: -0.08px;
`;
const LogLine = styled.div`
  flex: none;
  height: 14px;
  line-height: 15px;
  ${(p) => p.$short && css`letter-spacing: -0.25px;`}
  ${(p) => p.$prompt && css`font-weight: 700; letter-spacing: 0;`}
`;
const WARN = "at 0 ps, Instance /cpu_2214_test/uut/CPU_Registers_0/ : Warning: CONV_INTEGER: There is an 'U'|'X'|'W'|'Z'|'-' in an arithmetic operand, and it has been converted to 0.";
const LOG = [WARN, WARN, WARN, "Finished circuit initialization process.", WARN, WARN, WARN, "INFO: Simulator is stopped."];

const StatusBar = styled.div`
  flex: none;
  height: 29px;
  display: flex;
  justify-content: flex-end;
  align-items: flex-start;
  padding: 3px 2px 0 0;
`;
const SimTime = styled.span`
  width: 125px;
  height: 24px;
  border: 1px solid #a0a0a0;
  border-right-color: #fff;
  border-bottom-color: #fff;
  padding-left: 3px;
  line-height: 25px;
  letter-spacing: 0.05px;
`;

/* ---------- task bar ---------- */

const TaskBar = styled.footer`
  flex: none;
  height: 40px;
  display: flex;
  background: #02050a;
  color: #fff;
  font-family: ${SEGOE};
`;
const Start = styled.span`
  width: 48px;
  display: grid;
  place-items: center;
`;
const Cortana = styled.span`
  width: 344px;
  display: flex;
  align-items: center;
  gap: 9px;
  padding-left: 9px;
  background: #333;
  color: #9b9b9b;
  font-size: 15px;
  letter-spacing: -0.46px;
  line-height: 38px;
`;
const TaskButton = styled.span`
  width: ${(p) => p.$w || 49}px;
  display: grid;
  place-items: center;
  background: ${(p) => (p.$active ? "#33363a" : "transparent")};
  background-image: ${(p) => (p.$run ? "linear-gradient(#76b9ed, #76b9ed)" : "none")};
  background-repeat: no-repeat;
  background-position: center bottom;
  background-size: ${(p) => (p.$active ? "100%" : "40px")} 2px;
`;
const Tray = styled.span`
  margin-left: auto;
  display: flex;
  align-items: center;
  gap: 9px;
`;
const Clock = styled.span`
  width: 60px;
  display: flex;
  flex-direction: column;
  align-items: center;
  font-size: 12px;
  line-height: 17px;
  letter-spacing: -0.45px;
  padding-bottom: 1px;
`;
const ShowDesktop = styled.i`
  width: 5px;
  height: 40px;
  margin-left: -4px;
  border-left: 1px solid #555;
`;

const TaskIcons = {
  view: (
    <Glyph w={20} h={16}>
      <path d="M5.500 1.500h9v13h-9ZM3 3.500H.8v9H3M17 3.500h2.200v9H17" stroke="#fff" strokeWidth="1.200" />
    </Glyph>
  ),
  edge: (
    <Glyph w={22}>
      <path d="M1 10.500C2 4 6.500.5 11.500.5c6 0 9.500 4.500 9.500 9.500v2.500H8c.2 3.200 2.500 5 6 5 2.200 0 4.200-.6 6-1.600v4.300c-2 1-4.200 1.500-6.800 1.500-5.700 0-9.200-3.400-9.200-8.700 0-3 1.500-5.600 4-7.200C5 6.500 2.800 8 1 10.500ZM8.200 9h7.300c0-2.600-1.300-4-3.500-4S8.500 6.500 8.200 9Z" fill="#0a78d8" fillRule="evenodd" />
    </Glyph>
  ),
  explorer: (
    <Glyph w={22} h={20}>
      <path d="M0 1h9l2 2h11v17H0Z" fill="#f0c250" />
      <path d="M0 5h22v14H0Z" fill="#ffe08a" />
      <path d="M4 20v-8h14v8h-4v-4H8v4Z" fill="#22a7e0" />
    </Glyph>
  ),
  store: (
    <Glyph w={21} h={24}>
      <path d="M6 6V3.500C6 .5 13 .5 14 4M9 5c0-4 7-4.500 8 0v2" stroke="#fff" strokeWidth="1.200" />
      <path d="M0 6 21 5v18L0 21Z" fill="#fff" />
      <path d="M4 9.500 9.500 9v4.500H4ZM10.500 9l6-.4v5h-6ZM4 14.500h5.500V19L4 18.600ZM10.500 14.500h6v5l-6-.4Z" fill="#000" />
    </Glyph>
  ),
  ise: (
    <Glyph w={25} h={22}>
      <path d="M0 0h15l9.500 11L15 22H0l8-11Z" fill="#d4d845" />
      <path d="M8 11h16.500L15 22H0Z" fill="#8c9214" />
    </Glyph>
  ),
  chrome: (
    <Glyph w={22}>
      <circle cx="11" cy="11" r="11" fill="#fbc116" />
      <path d="M11 5.500h9.600A11 11 0 0 0 1.500 5.500L6.300 13.700Z" fill="#e23a2e" />
      <path d="M1.500 5.500A11 11 0 0 0 11 22l4.800-8.200-9.500-.1Z" fill="#2a9d48" />
      <circle cx="11" cy="11" r="5.200" fill="#fff" />
      <circle cx="11" cy="11" r="4.200" fill="#4486f4" />
    </Glyph>
  ),
  note: (
    <Glyph w={23} h={24}>
      <defs>
        <linearGradient id="note-green" x1="0" y1="0" x2="0" y2="1">
          <stop offset=".3" stopColor="#f6fbe8" />
          <stop offset=".6" stopColor="#9ed636" />
          <stop offset="1" stopColor="#4a9c10" />
        </linearGradient>
      </defs>
      <path d="M1 1h13l5 5v17H1Z" fill="url(#note-green)" stroke="#ddd" />
      <path d="M4.500 7h3v8h-3ZM10 10.500h2M14 10.500h2" stroke="#333" strokeWidth="1.300" />
      <path d="M22 1 14.500 18 13 20l.2-3L20 .5Z" fill="#f0a020" stroke="#8a5a10" strokeWidth=".6" />
    </Glyph>
  ),
};

const TrayIcons = (
  <>
    <Glyph w={13} h={8}><path d="M.8 7 6.500 1.200 12.200 7" stroke="#fff" strokeWidth="1.300" /></Glyph>
    <Glyph w={17} h={14}>
      <path d="M5.500 2H16v7.500H3.500V6M9.500 9.500V12M6 12.500h8" stroke="#fff" strokeWidth="1.200" />
      <path d="M.7.7h4v4h-4ZM2.700 5v3" stroke="#fff" />
    </Glyph>
    <Glyph w={15} h={13}>
      <path d="M.8 4.500h2.500L6.500 1v11L3.300 8.800H.8ZM9.500 4.500l4.500 4.500M14 4.500 9.500 9" stroke="#fff" strokeWidth="1.100" />
    </Glyph>
    <Glyph w={17} h={17}>
      <path d="M.8.8h15.400v12H10.500L8.500 15.500 6.500 12.800H.8Z" stroke="#fff" strokeWidth="1.300" />
      <path d="M3.500 4.200h10M3.500 7h10M3.500 9.800h6" stroke="#fff" strokeWidth="1.200" />
    </Glyph>
  </>
);

/* ---------- composition ---------- */

const Fx = styled.b`
  color: #e0661c;
  font-size: 10px;
  letter-spacing: -0.5px;
`;

const ScriptIcon = (
  <Glyph w={16}>
    <rect x="2.500" y="1.500" width="12" height="13" fill="#fff" stroke="#2f7fa8" />
    <path d="M5 4.500h6M7 7h5M5 9.500h7M7 12h5" stroke="#3f5f85" strokeWidth="1.200" />
  </Glyph>
);
const FILTERS = [<Chip />, <Cube s={18} />, ScriptIcon, <Process />, <Chip tone="orange" />, <Fx>F(x)</Fx>];

const InstancesDock = () => (
  <Dock $w={229}>
    <DockTitle>Instances and Processes<DockControls /></DockTitle>
    <CheckBar $h={33} $mt={3} $pt={0}>
      {FILTERS.map((icon, i) => (
        <CheckButton key={i} $end={i === 5}>{icon}</CheckButton>
      ))}
      <BarExtra $m="11px 0 0 29px">
        <Glyph w={10} h={9}><path d="M1 1l3.200 3.500L1 8M5 1l3.200 3.500L5 8" stroke="#000" strokeWidth="1.300" /></Glyph>
      </BarExtra>
    </CheckBar>
    <ListBox>
      <ListHead $ls={0.08}>
        <HeadCell $w={213} $pl={10}>Instance and Process Name</HeadCell>
        <HeadCell $pl={3}>D</HeadCell>
      </ListHead>
      <Rows>
        {TREE.map(([state, level, icon, label, type], i) => (
          <TreeRow key={i} $odd={i % 2 === 1}>
            <TreeName $indent={5 + level * 20} $bold={i === 0}>
              <TreeTwisty state={state} />
              {TREE_ICONS[icon]}
              <TreeLabel $hot={i === 0}>{label}</TreeLabel>
            </TreeName>
            <TreeType>{type}</TreeType>
          </TreeRow>
        ))}
      </Rows>
      <HScroll thumb={112} />
    </ListBox>
    <TabBar>
      <Tab $w={77} $on $gap={4}>{HierarchyIcon}Instanc...</Tab>
      <Tab $w={79} $gap={9} $pl={4}>{MemoryIcon}Memory</Tab>
      <Tab $w={72} $gap={3} $pl={4}>{SourceIcon}Source ...</Tab>
    </TabBar>
  </Dock>
);

const ObjectsDock = () => (
  <Dock $w={241}>
    <DockTitle>Objects<DockControls /></DockTitle>
    <Caption>Simulation Objects for cpu_2214_test</Caption>
    <CheckBar $h={34} $mt={0} $pt={1} $edge>
      {["i", "o", "io", "plus", "c", "v"].map((b, i) => (
        <CheckButton key={b} $end={i === 5}><Signal badge={b} stroke="#4f8f4f" /></CheckButton>
      ))}
      <Divider />
      <BarExtra $m="5px 0 0 8px">
        <Glyph w={18} h={18}>
          <circle cx="8" cy="9" r="6.500" fill="#c8e2f4" stroke="#a4b0b8" strokeWidth="1.500" />
          <path d="M2 3.500 5 1M11 1l3 2.500" stroke="#e8b858" strokeWidth="2.400" />
          <path d="M8 5v4l3-2" stroke="#687888" />
          <path d="M7 12h4v4H7ZM12 11h4v5h-4" fill="#e4e4e4" stroke="#777" />
        </Glyph>
      </BarExtra>
    </CheckBar>
    <ListBox>
      <ListHead $lh={25} $ls={-0.05}>
        <HeadCell $w={128} $pl={10}>Object Name</HeadCell>
        <HeadCell $pl={7}>Value</HeadCell>
      </ListHead>
      <Rows>
        {[["reset", "plus", "1"], ["clock", "plus", "1"], ["mem_dump", "plus", "0"], ["tick", "c", "100000 ps"], ["run_time", "c", "10010"]].map(([n, b, v], i) => (
          <TreeRow key={n} $odd={i % 2 === 1}>
            <ObjName><Signal badge={b} />{n}</ObjName>
            <ObjValue>{v}</ObjValue>
          </TreeRow>
        ))}
      </Rows>
      <HScroll thumb={125} />
    </ListBox>
  </Dock>
);

const NameColumn = () => (
  <Column $w={207}>
    <ColumnBody>
      <ColumnGap />
      <ColumnHead $pl={7}>Name</ColumnHead>
      <Cropped><Signal /></Cropped>
      {SIGNALS.map((s, i) => (
        <WaveRow key={i}>
          <WaveTwist $deep={s.deep}>
            {s.open && <Glyph w={12} h={10}><path d="M0 0h12L6 10Z" fill="#b4b4b4" /></Glyph>}
            {s.shut && <Glyph w={9} h={12}><path d="M0 1v11L9 6.500Z" fill="#a8a8a8" /></Glyph>}
          </WaveTwist>
          <WaveName $hot={s.hot} $deep={s.deep}>
            {s.icon === "bus" ? <Bus hot={s.hot} /> : <Signal badge={s.icon} />}
            {s.name}
          </WaveName>
        </WaveRow>
      ))}
      <ColumnFoot />
    </ColumnBody>
    <HScroll faint />
  </Column>
);

const ValueColumn = () => (
  <Column $w={138}>
    <ColumnBody>
      <ColumnGap />
      <ColumnHead $pl={8}>Value</ColumnHead>
      <Cropped />
      {SIGNALS.map((s, i) => <WaveValue key={i} $hot={s.hot}>{s.value}</WaveValue>)}
      <ColumnFoot />
    </ColumnBody>
    <HScroll faint />
  </Column>
);

const BundleIcon = (
  <Glyph w={16} h={17}>
    <path d="M2.500 0v17M13.500 0v17" stroke="#a0a0a0" strokeWidth="2" />
    <path d="M5 0v17M11 0v17" stroke="#b0b0b0" />
    <path d="M5 5h5M8 2l4 3-4 3M11 12H6M8 9l-4 3 4 3" stroke="#8e8e8e" fill="#eee" />
  </Glyph>
);
const SnapIcon = (
  <Glyph w={16} h={16}>
    <path d="M1 2h4v5M8.500 14V2h3v12H15" stroke="#4f8f3f" strokeWidth="1.600" />
    <path d="M7.500 5v10l-2-2-2.500 2.500 1-3-2-.5Z" stroke="#555" fill="#fff" />
  </Glyph>
);
const RulerIcon = (
  <Glyph w={17} h={16}>
    <rect x=".5" y="1.500" width="15.500" height="13" fill="#f2f2f2" stroke="#a0a0a0" />
    <path d="M0 2h16M0 5.500h16" stroke="#909090" strokeWidth="1.600" />
    <path d="M4 7v3M7 7v3M10 7v3M13 7v3" stroke="#999" />
  </Glyph>
);

const WaveWindow = () => (
  <WaveDock>
    <WaveTop>
      <SideTools>
        <SideSlot><Lens kind="in" /></SideSlot>
        <SideSlot><Lens kind="out" /></SideSlot>
        <SideSlot><LensFit /></SideSlot>
        <SideSlot><Lens kind="box" /></SideSlot>
        <SideRule />
        <SideSlot><GreenJump dir="start" /></SideSlot>
        <SideSlot><GreenJump dir="end" /></SideSlot>
        <SideSlot><Edge dir="prev" /></SideSlot>
        <SideSlot><Edge dir="next" /></SideSlot>
        <SideRule />
        <SideSlot><MarkerAdd /></SideSlot>
        <SideSlot><MarkerGo dir="prev" /></SideSlot>
        <SideSlot><MarkerGo dir="next" /></SideSlot>
        <SideRule />
        <SideSlot>{BundleIcon}</SideSlot>
        <SideSlot $on>{SnapIcon}</SideSlot>
        <SideSlot>{RulerIcon}</SideSlot>
      </SideTools>
      <NameColumn />
      <Splitter $w={2} $h={859} $light $dots={280} $shift={-6} />
      <ValueColumn />
      <Splitter $w={3} $h={859} $light $dots={280} $shift={-6} />
      <WaveArea>
        <Waveforms />
        <WaveBar><HScroll thumb={362} /></WaveBar>
      </WaveArea>
      <VBar>
        <VArrow $h={17}><Chevron dir="up" /></VArrow>
        <VThumb $h={786} $mt={39} />
        <VArrow $h={16}><Chevron dir="down" /></VArrow>
      </VBar>
    </WaveTop>
    <DocTabs>
      <DocTab>
        <WaveDoc />
        <DocName>Default.wcfg*</DocName>
        <Glyph w={14}>
          <rect x=".7" y=".7" width="12.600" height="12.600" rx="1.500" fill="#ea7f5c" stroke="#d83a24" strokeWidth="1.400" />
          <path d="M4 4l6 6M10 4l-6 6" stroke="#fff" strokeWidth="2.400" />
        </Glyph>
      </DocTab>
      <DocRest />
    </DocTabs>
    <DotRow />
  </WaveDock>
);

export default function App() {
  return (
    <Screen>
      <Global />
      <TitleBar>
        <ISimLogo s={16} />
        <TitleText>ISim (P.20131013) - [Default.wcfg*]</TitleText>
        <WindowButtons>
          <Glyph w={11}><path d="M0 5.500h10" stroke="#000" /></Glyph>
          <Glyph w={11}><path d="M.5 3.500h7v7h-7ZM2.500 3V.500h8v8H8" stroke="#000" /></Glyph>
          <Glyph w={11}><path d="M.5.500 10.500 10.500M10.500.500.500 10.500" stroke="#000" strokeWidth="1.200" /></Glyph>
        </WindowButtons>
      </TitleBar>
      <MenuBar>
        <WaveDoc />
        {[["File", 34], ["Edit", 36], ["View", 41], ["Simulation", 73], ["Window", 60], ["Layout", 52], ["Help", 40]].map(([t, w]) => (
          <MenuItem key={t} $w={w}>{t}</MenuItem>
        ))}
        <MdiButtons>
          <MdiButton><Glyph w={9}><path d="M1.500 7h6" stroke="#6f7f90" strokeWidth="2" /></Glyph></MdiButton>
          <MdiButton><Glyph w={9}><path d="M1 4.500h5v4H1ZM3 3.500V1.500h5v4H7" stroke="#6f7f90" strokeWidth="1.300" /></Glyph></MdiButton>
          <MdiButton><Glyph w={9}><path d="M1.500 1.500l6 6M7.500 1.500l-6 6" stroke="#6f7f90" strokeWidth="2" /></Glyph></MdiButton>
        </MdiButtons>
      </MenuBar>
      <ToolStrip>
        {GROUPS.map((g, i) => (
          <ToolGroup key={i} $w={g.w} $last={i === GROUPS.length - 1}>
            <Grip />
            {g.items.map((name, k) => <ToolItem key={k} name={name} />)}
          </ToolGroup>
        ))}
      </ToolStrip>
      <Workspace>
        <InstancesDock />
        <Splitter $w={4} $dots={288} />
        <ObjectsDock />
        <Splitter $w={5} $dots={288} />
        <WaveWindow />
      </Workspace>
      <DockTitle>Console<DockControls /></DockTitle>
      <ConsoleBox>
        <Log>
          {LOG.map((line, i) => <LogLine key={i} $short={line !== WARN}>{line}</LogLine>)}
          <LogLine $prompt>ISim&gt;</LogLine>
        </Log>
        <VBar $w={16} $flush>
          <VArrow $h={18}><Chevron dir="up" /></VArrow>
          <VThumb $h={14} $mt={67} $plain />
          <VArrow $h={16}><Chevron dir="down" /></VArrow>
        </VBar>
      </ConsoleBox>
      <TabBar>
        <Tab $w={81} $on>{ConsoleIcon}Console</Tab>
        <Tab $w={117}>{LogIcon}Compilation Log</Tab>
        <Tab $w={98} $gap={13} $pl={7}>{BreakIcon}Breakpoints</Tab>
        <Tab $w={135} $pl={6}>{FindIcon}Find in Files Results</Tab>
        <Tab $w={111} $gap={9}>{SearchIcon}Search Results</Tab>
      </TabBar>
      <StatusBar><SimTime>Sim Time: 1,600,000 ps</SimTime></StatusBar>
      <TaskBar>
        <Start>
          <Glyph w={17}>
            <path d="M0 2.500 7 1.500V8H0ZM8 1.400 17 0v8H8ZM0 9h7v6.500L0 14.500ZM8 9h9v8l-9-1.400Z" fill="#fff" />
          </Glyph>
        </Start>
        <Cortana>
          <Glyph w={22}><circle cx="11" cy="11" r="9" stroke="#fff" strokeWidth="2.800" /></Glyph>
          I'm Cortana. Ask me anything.
        </Cortana>
        <TaskButton>{TaskIcons.view}</TaskButton>
        <TaskButton>{TaskIcons.edge}</TaskButton>
        <TaskButton $run>{TaskIcons.explorer}</TaskButton>
        <TaskButton>{TaskIcons.store}</TaskButton>
        <TaskButton $run>{TaskIcons.ise}</TaskButton>
        <TaskButton $run>{TaskIcons.chrome}</TaskButton>
        <TaskButton $run>{TaskIcons.note}</TaskButton>
        <TaskButton $run $active>
          <ISimLogo s={24} />
        </TaskButton>
        <Tray>
          {TrayIcons}
          <Clock><span>5:37 PM</span><span>11/29/2017</span></Clock>
          <ShowDesktop />
        </Tray>
      </TaskBar>
    </Screen>
  );
}
